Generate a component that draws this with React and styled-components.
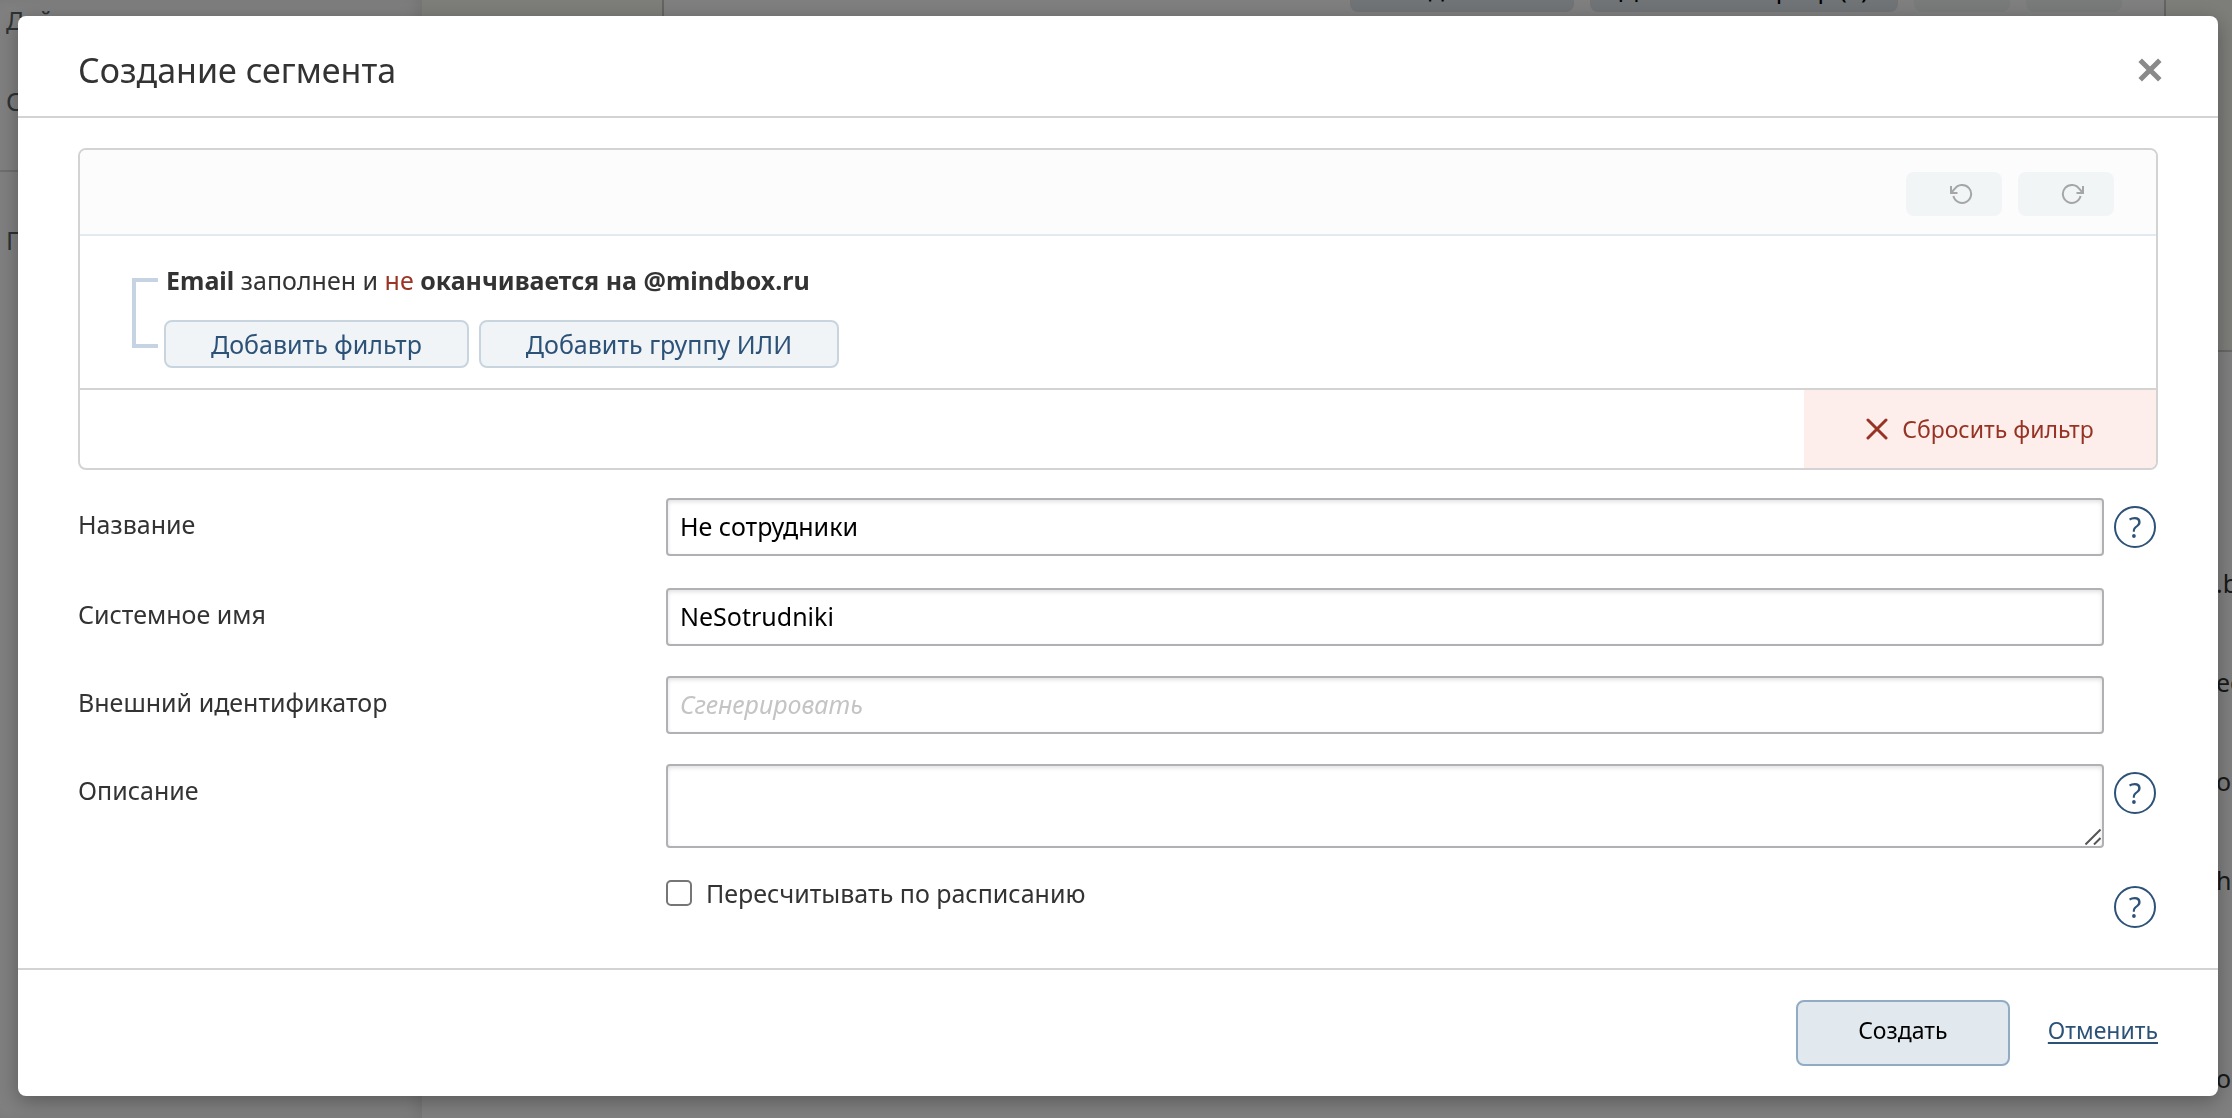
import { useState } from 'react'
import styled, { createGlobalStyle } from 'styled-components'

const menuItems = ['Действия', 'Система']
const rows = ['.by', 'ec', 'o', 'h', '', 'or']

export default function App() {
  return (
    <>
      <GlobalStyle />
      <BackPage />
      <Overlay>
        <SegmentModal />
      </Overlay>
    </>
  )
}

function BackPage() {
  return (
    <Page aria-hidden="true" inert>
      <Sidebar>
        <Menu>
          {menuItems.map((item) => (
            <MenuItem key={item}>{item}</MenuItem>
          ))}
        </Menu>
        <Menu>
          <MenuItem>Проекты</MenuItem>
        </Menu>
      </Sidebar>
      <Main>
        <Hero>
          <HeroPanel>
            <HeroButton $width="224px">Создать тест</HeroButton>
            <HeroButton $width="308px">Добавить маркер (1)</HeroButton>
            <HeroButton $width="96px" disabled />
            <HeroButton $width="96px" disabled />
          </HeroPanel>
        </Hero>
        <RowList>
          {rows.map((text, index) => (
            <Row key={index}>{text}</Row>
          ))}
        </RowList>
      </Main>
    </Page>
  )
}

function SegmentModal() {
  const [name, setName] = useState('Не сотрудники')
  const [systemName, setSystemName] = useState('NeSotrudniki')

  return (
    <Modal role="dialog" aria-labelledby="modal-title">
      <Header>
        <Title id="modal-title">Создание сегмента</Title>
        <CloseButton type="button" aria-label="Закрыть">
          <svg width="24" height="24" viewBox="0 0 24 24" stroke="#8a8a8a" strokeWidth="5">
            <path d="M2.2 2.2 21.8 21.8M21.8 2.2 2.2 21.8" />
          </svg>
        </CloseButton>
      </Header>

      <Body>
        <FilterPanel>
          <Toolbar>
            <HistoryButton type="button" aria-label="Отменить действие">
              <UndoIcon />
            </HistoryButton>
            <HistoryButton type="button" aria-label="Повторить действие">
              <RedoIcon />
            </HistoryButton>
          </Toolbar>
          <FilterContent>
            <Bracket />
            <div>
              <FilterText>
                <b>Email</b> заполнен и <Negation>не</Negation> <b>оканчивается на @mindbox.ru</b>
              </FilterText>
              <FilterActions>
                <FilterButton type="button">Добавить фильтр</FilterButton>
                <FilterButton type="button">Добавить группу ИЛИ</FilterButton>
              </FilterActions>
            </div>
          </FilterContent>
          <FilterFooter>
            <ResetButton type="button">
              <svg
                width="22"
                height="22"
                viewBox="0 0 22 22"
                stroke="currentColor"
                strokeWidth="3"
                strokeLinecap="round"
              >
                <path d="M2 2 20 20M20 2 2 20" />
              </svg>
              Сбросить фильтр
            </ResetButton>
          </FilterFooter>
        </FilterPanel>

        <Form>
          <Label htmlFor="name">Название</Label>
          <Input id="name" value={name} onChange={(e) => setName(e.target.value)} />
          <HelpButton type="button" aria-label="Справка">
            ?
          </HelpButton>

          <Label htmlFor="system-name">Системное имя</Label>
          <Input
            id="system-name"
            value={systemName}
            onChange={(e) => setSystemName(e.target.value)}
          />
          <span />

          <Label htmlFor="external-id">Внешний идентификатор</Label>
          <Input id="external-id" placeholder="Сгенерировать" />
          <span />

          <Label htmlFor="description">Описание</Label>
          <TextareaBox>
            <Textarea id="description" />
            <Grip width="16" height="16" viewBox="0 0 16 16" stroke="#555" strokeWidth="2">
              <path d="M0.5 15.5 15.5 0.5M9 15.5 15.5 9" />
            </Grip>
          </TextareaBox>
          <HelpButton type="button" aria-label="Справка">
            ?
          </HelpButton>

          <span />
          <CheckboxLabel>
            <Checkbox type="checkbox" />
            Пересчитывать по расписанию
          </CheckboxLabel>
          <HelpButton type="button" aria-label="Справка">
            ?
          </HelpButton>
        </Form>
      </Body>

      <Footer>
        <CreateButton type="button">Создать</CreateButton>
        <CancelLink href="#cancel">Отменить</CancelLink>
      </Footer>
    </Modal>
  )
}

function UndoIcon() {
  return (
    <svg width="24" height="22" viewBox="0 0 24 22" fill="none" stroke="#a6a6a6" strokeWidth="2">
      <path d="M2 3V10H8.5M2 10 5.6 6A9 9 0 1 1 4.4 13" />
    </svg>
  )
}

function RedoIcon() {
  return (
    <svg width="24" height="22" viewBox="0 0 24 22" fill="none" stroke="#a6a6a6" strokeWidth="2">
      <path d="M22 3V10H15.5M22 10 18.4 6A9 9 0 1 0 19.6 13" />
    </svg>
  )
}

const GlobalStyle = createGlobalStyle`
  *, *::before, *::after {
    box-sizing: border-box;
  }
  body {
    margin: 0;
    overflow: hidden;
    font-family: 'Noto Sans', 'Open Sans', sans-serif;
    font-size: 25px;
    color: #333;
    background-color: #fff;
  }
  button, input, textarea {
    font: inherit;
  }
  button {
    cursor: pointer;
  }
  h1, p, ul {
    margin: 0;
    padding: 0;
  }
`

/* page under the modal */

const Page = styled.div`
  display: flex;
  height: 100vh;
  overflow: hidden;
`

const Sidebar = styled.nav`
  flex: 0 0 422px;
  box-shadow: inset -8px 0 16px -4px rgba(0, 0, 0, 0.1);
`

const Menu = styled.ul`
  list-style: none;
  color: #56656a;

  &:first-child {
    margin-top: -20px;
    padding-bottom: 28px;
    border-bottom: 2px solid #dcdcdc;
  }
  &:last-child {
    padding-top: 28px;
  }
`

const MenuItem = styled.li`
  padding-left: 6px;
  line-height: 81px;
`

const Main = styled.main`
  flex: 1;
  min-width: 0;
`

const Hero = styled.div`
  height: 352px;
  padding: 0 66px 0 240px;
  background-color: #fbfaf5;
  border-bottom: 2px solid #cfcfcf;
`

const HeroPanel = styled.div`
  display: flex;
  justify-content: flex-end;
  gap: 16px;
  height: 100%;
  padding-right: 42px;
  background-color: #fff;
  border: solid #c8c8c4;
  border-width: 0 2px;
`

const HeroButton = styled.button`
  width: ${(props) => props.$width};
  height: 56px;
  margin-top: -44px;
  padding: 8px 0 0;
  border: none;
  border-radius: 8px;
  white-space: nowrap;
  color: #000;
  background-color: #e0e8ed;

  &:disabled {
    background-color: #f2f6f6;
  }
`

const RowList = styled.ul`
  display: flex;
  flex-direction: column;
  align-items: flex-end;
  padding-top: 182px;
  list-style: none;
`

const Row = styled.li`
  width: 16px;
  height: 99px;
  line-height: 99px;
  overflow: hidden;
`

/* modal */

const Overlay = styled.div`
  position: fixed;
  inset: 0;
  display: flex;
  align-items: flex-start;
  padding: 16px 14px 22px 18px;
  overflow: auto;
  background-color: rgba(0, 0, 0, 0.5);
`

const Modal = styled.div`
  flex: 1;
  min-width: 0;
  border-radius: 8px;
  background-color: #fff;
  box-shadow: 0 5px 20px rgba(0, 0, 0, 0.3);
`

const Header = styled.header`
  display: flex;
  align-items: center;
  justify-content: space-between;
  height: 102px;
  padding: 8px 56px 0 60px;
  border-bottom: 2px solid #d3d3d3;
`

const Title = styled.h1`
  font-size: 34px;
  font-weight: 400;
`

const CloseButton = styled.button`
  display: flex;
  padding: 0;
  border: none;
  background: none;
`

const Body = styled.div`
  padding: 30px 60px;
`

const FilterPanel = styled.section`
  margin-bottom: 28px;
  border: 2px solid #d3d3d3;
  border-radius: 8px;
  overflow: hidden;
`

const Toolbar = styled.div`
  display: flex;
  align-items: center;
  justify-content: flex-end;
  gap: 16px;
  height: 86px;
  padding: 4px 42px 0 0;
  background-color: #fcfcfc;
  border-bottom: 2px solid #e2e9f0;
`

const HistoryButton = styled.button`
  display: flex;
  align-items: center;
  justify-content: center;
  width: 96px;
  height: 44px;
  padding: 0 0 0 14px;
  border: none;
  border-radius: 8px;
  background-color: #f1f5f6;
`

const FilterContent = styled.div`
  display: flex;
  gap: 6px;
  padding: 24px 52px 20px;
`

const Bracket = styled.div`
  width: 26px;
  height: 70px;
  margin-top: 18px;
  border: 4px solid #c5d3e2;
  border-right: none;
`

const FilterText = styled.p`
  padding-left: 2px;
  line-height: 40px;
`

const Negation = styled.span`
  color: #9b3425;
`

const FilterActions = styled.div`
  display: flex;
  gap: 10px;
  margin-top: 20px;
`

const FilterButton = styled.button`
  height: 48px;
  padding: 0 45px;
  border: 2px solid #c8d5df;
  border-radius: 8px;
  color: #2d5278;
  background-color: #f0f4f7;
`

const FilterFooter = styled.div`
  display: flex;
  justify-content: flex-end;
  border-top: 2px solid #d3d3d3;
`

const ResetButton = styled.button`
  display: flex;
  align-items: center;
  justify-content: center;
  gap: 14px;
  width: 352px;
  height: 78px;
  padding: 0;
  border: none;
  font-size: 23px;
  color: #963325;
  background-color: #fdeeeb;
`

const Form = styled.form`
  display: grid;
  grid-template-columns: 588px 1fr 54px;
  align-items: start;
  row-gap: 30px;
`

const Label = styled.label`
  line-height: 52px;
`

const fieldStyles = `
  display: block;
  width: 100%;
  border: 2px solid #b0b0b5;
  border-radius: 4px;
  color: #000;
  background-color: #fff;
  box-shadow: inset 0 2px 4px rgba(0, 0, 0, 0.12);
`

const Input = styled.input`
  ${fieldStyles}
  height: 58px;
  padding: 0 12px 2px;

  &::placeholder {
    font-style: italic;
    color: #c4c4c6;
  }
`

const TextareaBox = styled.div`
  position: relative;
`

const Textarea = styled.textarea`
  ${fieldStyles}
  height: 84px;
  padding: 10px 12px;
  resize: none;
`

const Grip = styled.svg`
  position: absolute;
  right: 3px;
  bottom: 3px;
`

const HelpButton = styled.button`
  width: 42px;
  height: 42px;
  margin: 8px 0 10px 10px;
  padding: 0;
  border: 2px solid #2d5278;
  border-radius: 50%;
  font-size: 29px;
  line-height: 36px;
  color: #2d5278;
  background: none;
`

const CheckboxLabel = styled.label`
  display: flex;
  align-items: center;
  gap: 14px;
  line-height: 30px;
`

const Checkbox = styled.input`
  appearance: none;
  width: 26px;
  height: 26px;
  margin: 0;
  border: 2px solid #767676;
  border-radius: 5px;
`

const Footer = styled.footer`
  display: flex;
  align-items: center;
  justify-content: flex-end;
  gap: 38px;
  padding: 30px 60px;
  border-top: 2px solid #d3d3d3;
`

const CreateButton = styled.button`
  width: 214px;
  height: 66px;
  padding: 0 0 6px;
  border: 2px solid #90abc3;
  border-radius: 8px;
  font-size: 23px;
  color: #000;
  background-color: #e1e8ee;
`

const CancelLink = styled.a`
  padding-bottom: 6px;
  font-size: 23px;
  color: #2d5278;
  text-decoration-thickness: 2px;
  text-underline-offset: 3px;
`
